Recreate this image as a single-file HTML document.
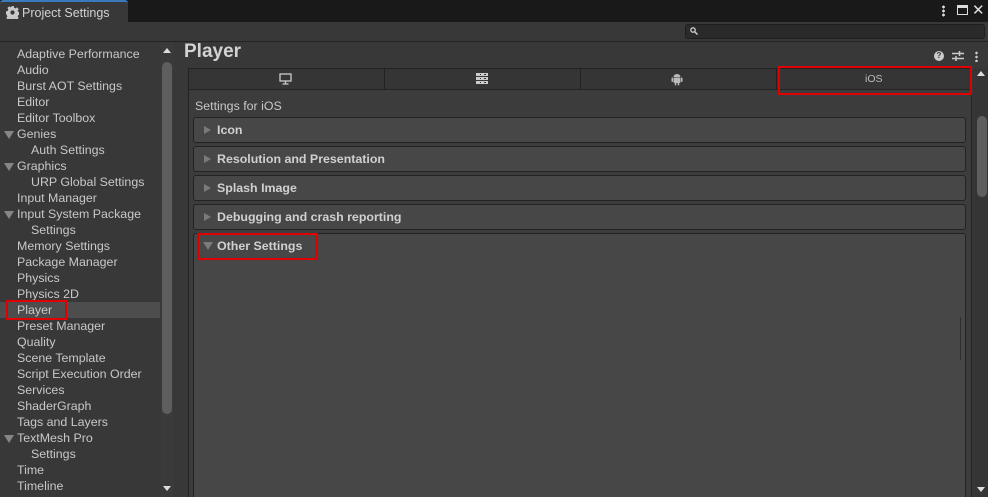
<!DOCTYPE html>
<html style="width:988px;height:497px;overflow:hidden"><head><meta charset="utf-8"><style>
*{box-sizing:border-box;margin:0;padding:0}
body{width:988px;height:497px;overflow:hidden;background:#383838;font-family:"Liberation Sans",sans-serif;font-size:12px;color:#c4c4c4;position:relative}
.abs{position:absolute}
.titlebar{left:0;top:0;width:988px;height:22px;background:#191919}
.tab{left:0;top:0;width:128px;height:22px;background:#383838;border-top:2px solid #3a79bb;color:#d2d2d2;font-size:12.5px;padding:4px 0 0 22px;border-radius:3px 3px 0 0}
.toolbar{left:0;top:22px;width:988px;height:20px;background:#383838;border-bottom:1px solid #232323}
.search{left:685px;top:24px;width:300px;height:15px;background:#2a2a2a;border:1px solid #1e1e1e;border-radius:3px}
.side{left:0;top:42px;width:174px;height:455px;background:#383838;border-right:1px solid #232323}
.item{position:absolute;left:17px;height:16px;line-height:16px;font-size:12.4px;color:#c8c8c8;white-space:nowrap}
.sub{left:31px}
.tri{position:absolute;left:4px;width:0;height:0;border-left:5px solid transparent;border-right:5px solid transparent;border-top:8px solid #858585}
.main{left:175px;top:42px;width:813px;height:455px;background:#383838}
.sec{position:absolute;left:193px;width:773px;height:26px;background:#474747;border:1px solid #232323;border-radius:3px;font-weight:bold;color:#d0d0d0;font-size:12.4px;padding:5px 0 0 23px}
.sec.r:before{content:"";position:absolute;left:10px;top:8px;border-top:4.5px solid transparent;border-bottom:4.5px solid transparent;border-left:7px solid #7a7a7a}
.red{position:absolute;border:2px solid #e00000}
</style></head><body>
<div class="abs titlebar"></div>
<div class="abs tab"><svg class="abs" style="left:6px;top:4px" width="13" height="13" viewBox="0 0 16 16"><path fill="#c8c8c8" d="M6.5 0h3l.5 2.2 1.6.7 1.9-1.2 2.1 2.1-1.2 1.9.7 1.6 2.2.5v3l-2.2.5-.7 1.6 1.2 1.9-2.1 2.1-1.9-1.2-1.6.7-.5 2.2h-3l-.5-2.2-1.6-.7-1.9 1.2-2.1-2.1 1.2-1.9-.7-1.600L0 9.5v-3l2.2-.5.7-1.6-1.2-1.9 2.1-2.1 1.9 1.2 1.6-.7z"/><circle cx="8" cy="8" r="2.6" fill="#383838"/></svg>Project Settings</div>
<div class="abs" style="left:942px;top:5px;width:3px;height:12px;background:radial-gradient(circle,#ddd 1.3px,transparent 1.5px) 0 0/3px 4px"></div>
<div class="abs" style="left:957px;top:5px;width:11px;height:10px;border:1.5px solid #ddd;border-top-width:3px"></div>
<div class="abs" style="left:972px;top:1px;color:#ddd;font-size:15px">✕</div>
<div class="abs toolbar"></div>
<div class="abs search"><svg class="abs" style="left:4px;top:2px" width="8" height="8" viewBox="0 0 8 8"><circle cx="3" cy="3" r="2.2" fill="none" stroke="#ccc" stroke-width="1.3"/><path d="M4.6 4.6L7.5 7.5" stroke="#ccc" stroke-width="1.5"/></svg></div>
<div class="abs side">
<div class="item" style="top:4px">Adaptive Performance</div>
<div class="item" style="top:20px">Audio</div>
<div class="item" style="top:36px">Burst AOT Settings</div>
<div class="item" style="top:52px">Editor</div>
<div class="item" style="top:68px">Editor Toolbox</div>
<div class="tri" style="top:89px"></div><div class="item" style="top:84px">Genies</div>
<div class="item sub" style="top:100px">Auth Settings</div>
<div class="tri" style="top:121px"></div><div class="item" style="top:116px">Graphics</div>
<div class="item sub" style="top:132px">URP Global Settings</div>
<div class="item" style="top:148px">Input Manager</div>
<div class="tri" style="top:169px"></div><div class="item" style="top:164px">Input System Package</div>
<div class="item sub" style="top:180px">Settings</div>
<div class="item" style="top:196px">Memory Settings</div>
<div class="item" style="top:212px">Package Manager</div>
<div class="item" style="top:228px">Physics</div>
<div class="item" style="top:244px">Physics 2D</div>
<div class="abs" style="left:0;top:260px;width:160px;height:16px;background:#4d4d4d"></div>
<div class="item" style="top:260px">Player</div>
<div class="item" style="top:276px">Preset Manager</div>
<div class="item" style="top:292px">Quality</div>
<div class="item" style="top:308px">Scene Template</div>
<div class="item" style="top:324px">Script Execution Order</div>
<div class="item" style="top:340px">Services</div>
<div class="item" style="top:356px">ShaderGraph</div>
<div class="item" style="top:372px">Tags and Layers</div>
<div class="tri" style="top:393px"></div><div class="item" style="top:388px">TextMesh Pro</div>
<div class="item sub" style="top:404px">Settings</div>
<div class="item" style="top:420px">Time</div>
<div class="item" style="top:436px">Timeline</div>
<div class="abs" style="left:161px;top:0;width:13px;height:455px;background:#3a3a3a"></div>
<div class="abs" style="left:163px;top:6px;border-left:4px solid transparent;border-right:4px solid transparent;border-bottom:5px solid #ddd"></div>
<div class="abs" style="left:163px;top:444px;border-left:4px solid transparent;border-right:4px solid transparent;border-top:5px solid #ddd"></div>
<div class="abs" style="left:162px;top:20px;width:10px;height:352px;background:#5e5e5e;border-radius:5px"></div>
</div>
<div class="red" style="left:6px;top:300px;width:61px;height:20px"></div>
<div class="abs main"></div>
<div class="abs" style="left:184px;top:41px;font-size:19px;font-weight:bold;color:#d2d2d2">Player</div>
<div class="abs" style="left:934px;top:51px;width:10px;height:10px;border-radius:50%;background:#ccc;color:#383838;font-size:8px;font-weight:bold;text-align:center;line-height:10px">?</div>
<svg class="abs" style="left:952px;top:50px" width="12" height="12" viewBox="0 0 12 12"><path d="M0 3.5h12M0 8.5h12" stroke="#ccc" stroke-width="1.5"/><path d="M7.5 1v5M4 6v5" stroke="#ccc" stroke-width="1.5"/></svg>
<div class="abs" style="left:975px;top:51px;width:3px;height:11px;background:radial-gradient(circle,#ccc 1.2px,transparent 1.4px) 0 0/3px 4px"></div>
<div class="abs" style="left:188px;top:68px;width:784px;height:429px;border-left:1px solid #232323;border-right:1px solid #232323;background:#3c3c3c"></div>
<div class="abs" style="left:188px;top:68px;width:784px;height:22px;background:#353535;border:1px solid #232323"></div>
<div class="abs" style="left:384px;top:68px;width:1px;height:22px;background:#232323"></div>
<div class="abs" style="left:580px;top:68px;width:1px;height:22px;background:#232323"></div>
<div class="abs" style="left:776px;top:68px;width:1px;height:22px;background:#232323"></div>
<svg class="abs" style="left:279px;top:73px" width="13" height="12" viewBox="0 0 13 12"><rect x="1" y="1" width="11" height="7" fill="none" stroke="#ccc" stroke-width="1.3"/><path d="M6.5 8v2.5M3.5 11h6" stroke="#ccc" stroke-width="1.3"/></svg>
<svg class="abs" style="left:476px;top:73px" width="12" height="11" viewBox="0 0 12 11"><g fill="#ccc"><rect y="0" width="12" height="3"/><rect y="4" width="12" height="3"/><rect y="8" width="12" height="3"/></g><g fill="#353535"><rect x="4" y="1" width="1" height="1"/><rect x="4" y="5" width="1" height="1"/><rect x="4" y="9" width="1" height="1"/><rect x="8" y="1" width="2" height="1"/><rect x="8" y="5" width="2" height="1"/><rect x="8" y="9" width="2" height="1"/></g></svg>
<svg class="abs" style="left:671px;top:72px" width="12" height="14" viewBox="0 0 12 14"><g fill="#bbb"><path d="M2.5 5a3.5 3 0 0 1 7 0z"/><rect x="2.5" y="5.5" width="7" height="5.5" rx="1"/><rect x="0.5" y="5.5" width="1.5" height="4.5" rx=".7"/><rect x="10" y="5.5" width="1.5" height="4.5" rx=".7"/><rect x="3.8" y="10" width="1.5" height="3.5" rx=".7"/><rect x="6.7" y="10" width="1.5" height="3.5" rx=".7"/></g></svg>
<div class="abs" style="left:865px;top:73px;color:#bdbdbd;font-size:10.5px">iOS</div>
<div class="red" style="left:778px;top:66px;width:194px;height:29px"></div>
<div class="abs" style="left:195px;top:99px;font-size:12.4px;color:#c8c8c8">Settings for iOS</div>
<div class="sec r" style="top:117px">Icon</div>
<div class="sec r" style="top:146px">Resolution and Presentation</div>
<div class="sec r" style="top:175px">Splash Image</div>
<div class="sec r" style="top:204px">Debugging and crash reporting</div>
<div class="sec" style="top:233px;height:264px;border-bottom:none;border-radius:3px 3px 0 0">Other Settings</div>
<div class="abs" style="left:203px;top:242px;border-left:5px solid transparent;border-right:5px solid transparent;border-top:8px solid #7a7a7a"></div>
<div class="abs" style="left:960px;top:317px;width:1px;height:43px;background:#2e2e2e"></div>
<div class="red" style="left:197px;top:233px;width:121px;height:27px"></div>
<div class="abs" style="left:973px;top:68px;width:15px;height:429px;background:#353535"></div>
<div class="abs" style="left:977px;top:71px;border-left:4px solid transparent;border-right:4px solid transparent;border-bottom:5px solid #ddd"></div>
<div class="abs" style="left:977px;top:487px;border-left:4px solid transparent;border-right:4px solid transparent;border-top:5px solid #ddd"></div>
<div class="abs" style="left:977px;top:116px;width:10px;height:81px;background:#5e5e5e;border-radius:5px"></div>
</body></html>
